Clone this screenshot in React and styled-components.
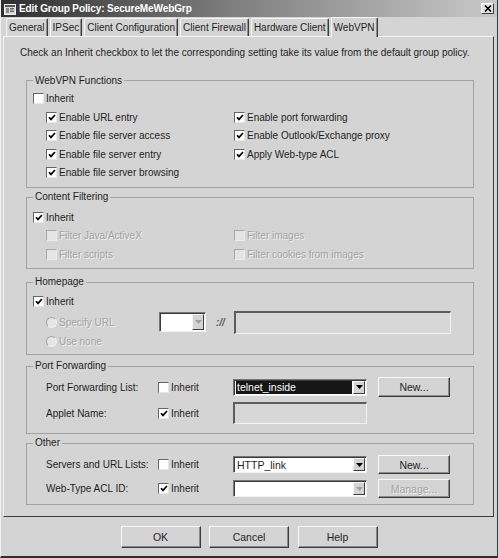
import React from 'react';
import styled, { createGlobalStyle } from 'styled-components';

const GlobalStyle = createGlobalStyle`
  html, body {
    margin: 0;
    padding: 0;
    background: #d4d4d4;
  }
  body {
    font-family: "Liberation Sans", Arial, sans-serif;
    font-size: 10px;
    color: #1e1e1e;
  }
  * {
    box-sizing: border-box;
  }
`;

const Window = styled.div`
  width: 498px;
  height: 558px;
  display: flex;
  flex-direction: column;
  background: #d4d4d4;
  border-left: 1px solid #f2f2f2;
  border-right: 1px solid #3a3a3a;
  border-bottom: 2px solid #2e2e2e;
`;

const TitleBar = styled.div`
  height: 17px;
  flex: none;
  display: flex;
  align-items: center;
  gap: 3px;
  padding: 0 3px 0 3px;
  background: linear-gradient(to right, #2e2e2e 0%, #7c7c7c 45%, #c9c9c9 100%);
  color: #fff;
  font-weight: bold;
  font-size: 10px;
  letter-spacing: -0.1px;
`;

const CloseButton = styled.div`
  margin-left: auto;
  width: 13px;
  height: 11px;
  display: flex;
  align-items: center;
  justify-content: center;
  background: #e2e2e2;
  border: 1px solid;
  border-color: #fafafa #3c3c3c #3c3c3c #fafafa;
`;

const TabStrip = styled.div`
  height: 19px;
  flex: none;
  display: flex;
  align-items: flex-end;
  gap: 2px;
  padding-left: 5px;
`;

const Tab = styled.div`
  height: ${p => (p.$active ? 20 : 18)}px;
  margin-bottom: ${p => (p.$active ? -1 : 0)}px;
  position: relative;
  z-index: ${p => (p.$active ? 1 : 0)};
  display: flex;
  align-items: center;
  padding: 0 2px;
  background: #d4d4d4;
  border-top: 1px solid #f6f6f6;
  border-left: 1px solid #f6f6f6;
  border-right: 1px solid #3c3c3c;
  border-radius: 2px 2px 0 0;
  box-shadow: inset -1px 0 0 #8e8e8e;
  white-space: nowrap;
`;

const Panel = styled.div`
  height: 481px;
  flex: none;
  margin: 0 3px 0 2px;
  padding: 9.5px 19px 0 22px;
  border: 1px solid;
  border-color: #f6f6f6 #3c3c3c #3c3c3c #f6f6f6;
  display: flex;
  flex-direction: column;
`;

const Intro = styled.div`
  margin-left: -6px;
  line-height: 12px;
  white-space: nowrap;
`;

const Group = styled.fieldset`
  margin: ${p => p.$mt}px 0 0;
  padding: ${p => p.$pt}px 0 ${p => p.$pb}px 6px;
  border: 1px solid #a2a2a2;
  min-width: 0;
`;

const Legend = styled.legend`
  padding: 0 2px;
  line-height: 12px;
  font-size: 10px;
`;

const Row = styled.div`
  height: ${p => p.$h || 18.5}px;
  display: flex;
  align-items: center;
  gap: 2px;
  color: ${p => (p.$disabled ? '#a3a3a3' : '#1e1e1e')};
  text-shadow: ${p => (p.$disabled ? '1px 1px 0 #efefef' : 'none')};
  white-space: nowrap;
`;

const Options = styled.div`
  margin-left: 13px;
  display: grid;
  grid-template-columns: 188px 1fr;
`;

const Box = styled.span`
  width: 11px;
  height: 11px;
  flex: none;
  display: flex;
  align-items: center;
  justify-content: center;
  background: ${p => (p.$disabled ? '#e4e4e4' : '#fff')};
  border: 1px solid;
  border-color: ${p =>
    p.$disabled ? '#a8a8a8 #ececec #ececec #a8a8a8' : '#666 #e6e6e6 #e6e6e6 #666'};
`;

const Radio = styled.span`
  width: 11px;
  height: 11px;
  flex: none;
  border-radius: 50%;
  background: #e6e6e6;
  border: 1px solid;
  border-color: #a4a4a4 #f0f0f0 #f0f0f0 #a4a4a4;
`;

const Check = ({ checked, disabled, children, h }) => (
  <Row $disabled={disabled} $h={h}>
    <Box $disabled={disabled}>
      {checked && (
        <svg width="8" height="7" viewBox="0 0 8 7">
          <path d="M1 3.2 L3 5.4 L7 1" fill="none" stroke="#000" strokeWidth="1.7" />
        </svg>
      )}
    </Box>
    {children}
  </Row>
);

const HomeRow = styled.div`
  height: ${p => p.$h}px;
  margin-left: 13px;
  display: grid;
  grid-template-columns: 113px 47px 28px 217px;
  align-items: center;
`;

const Slash = styled.span`
  padding-left: 10px;
  color: #5a5a5a;
  font-weight: bold;
  font-style: italic;
`;

const FormRow = styled.div`
  height: ${p => p.$h}px;
  margin: ${p => p.$mt || 0}px 0 0 13px;
  display: grid;
  grid-template-columns: 112px 75px 145px 72px;
  align-items: center;
`;

const Label = styled.span`
  white-space: nowrap;
`;

const ComboFrame = styled.div`
  width: ${p => p.$w}px;
  height: ${p => p.$h}px;
  display: flex;
  padding: 1px;
  background: #fff;
  border: 1px solid;
  border-color: #767676 #f2f2f2 #f2f2f2 #767676;
  box-shadow: inset 1px 1px 0 #3a3a3a;
`;

const ComboText = styled.div`
  flex: 1;
  display: flex;
  align-items: center;
  margin: 0 1px 0 1px;
  padding-left: 1px;
  background: ${p => (p.$selected ? '#161616' : 'transparent')};
  color: ${p => (p.$selected ? '#fff' : '#1e1e1e')};
  font-size: 10.5px;
`;

const ComboArrow = styled.div`
  width: 12px;
  flex: none;
  display: flex;
  align-items: center;
  justify-content: center;
  background: #d4d4d4;
  border: 1px solid;
  border-color: #f6f6f6 #3c3c3c #3c3c3c #f6f6f6;
`;

const Combo = ({ w, h, value, selected, disabled }) => (
  <ComboFrame $w={w} $h={h}>
    <ComboText $selected={selected}>{value}</ComboText>
    <ComboArrow>
      <svg width="7" height="4" viewBox="0 0 7 4">
        <path d="M0 0 H7 L3.5 4 Z" fill={disabled ? '#a0a0a0' : '#000'} />
      </svg>
    </ComboArrow>
  </ComboFrame>
);

const Field = styled.div`
  width: ${p => p.$w}px;
  height: ${p => p.$h}px;
  background: #d7d7d7;
  border-top: 2px solid #5c5c5c;
  border-left: 2px solid #5c5c5c;
  border-right: 1px solid #f2f2f2;
  border-bottom: 1px solid #f2f2f2;
`;

const Button = styled.button`
  width: ${p => p.$w}px;
  height: ${p => p.$h}px;
  padding: 0;
  background: #d4d4d4;
  font-family: "Liberation Sans", Arial, sans-serif;
  font-size: 10.5px;
  color: ${p => (p.disabled ? '#a3a3a3' : '#1e1e1e')};
  text-shadow: ${p => (p.disabled ? '1px 1px 0 #efefef' : 'none')};
  border: 1px solid;
  border-color: #f8f8f8 #3a3a3a #3a3a3a #f8f8f8;
  box-shadow: inset -1px -1px 0 #8c8c8c;
`;

const Footer = styled.div`
  flex: 1;
  display: flex;
  justify-content: center;
  gap: 8.5px;
  padding-top: 9px;
`;

const leftOptions = [
  'Enable URL entry',
  'Enable file server access',
  'Enable file server entry',
  'Enable file server browsing',
];
const rightOptions = ['Enable port forwarding', 'Enable Outlook/Exchange proxy', 'Apply Web-type ACL'];

const tabs = ['General', 'IPSec', 'Client Configuration', 'Client Firewall', 'Hardware Client', 'WebVPN'];

const AppIcon = () => (
  <svg width="12" height="12" viewBox="0 0 12 12">
    <rect x="0.5" y="1.5" width="11" height="10" fill="#d8d8d8" stroke="#f0f0f0" />
    <rect x="1" y="2" width="10" height="2" fill="#555" />
    <rect x="2" y="5" width="3" height="5" fill="#8a8a8a" />
    <rect x="6" y="5" width="4" height="1.5" fill="#6a6a6a" />
    <rect x="6" y="7.5" width="4" height="1.5" fill="#6a6a6a" />
  </svg>
);

export default function App() {
  return (
    <>
      <GlobalStyle />
      <Window>
        <TitleBar>
          <AppIcon />
          <span>Edit Group Policy: SecureMeWebGrp</span>
          <CloseButton>
            <svg width="8" height="7" viewBox="0 0 8 7">
              <path d="M1 0.5 L7 6.5 M7 0.5 L1 6.5" stroke="#000" strokeWidth="1.6" />
            </svg>
          </CloseButton>
        </TitleBar>

        <TabStrip>
          {tabs.map(t => (
            <Tab key={t} $active={t === 'WebVPN'}>
              {t}
            </Tab>
          ))}
        </TabStrip>

        <Panel>
          <Intro>
            Check an Inherit checkbox to let the corresponding setting take its value from the default group policy.
          </Intro>

          <Group $mt={16} $pt={3} $pb={5}>
            <Legend>WebVPN Functions</Legend>
            <Check>Inherit</Check>
            <Options>
              <div>
                {leftOptions.map(o => (
                  <Check key={o} checked>
                    {o}
                  </Check>
                ))}
              </div>
              <div>
                {rightOptions.map(o => (
                  <Check key={o} checked>
                    {o}
                  </Check>
                ))}
              </div>
            </Options>
          </Group>

          <Group $mt={3} $pt={5} $pb={4.5}>
            <Legend>Content Filtering</Legend>
            <Check checked>Inherit</Check>
            <Options>
              <div>
                <Check disabled>Filter Java/ActiveX</Check>
                <Check disabled>Filter scripts</Check>
              </div>
              <div>
                <Check disabled>Filter images</Check>
                <Check disabled>Filter cookies from images</Check>
              </div>
            </Options>
          </Group>

          <Group $mt={7} $pt={4} $pb={7.5}>
            <Legend>Homepage</Legend>
            <Check checked>Inherit</Check>
            <HomeRow $h={22}>
              <Row $disabled>
                <Radio />
                Specify URL
              </Row>
              <Combo w={47} h={20} disabled />
              <Slash>://</Slash>
              <Field $w={217} $h={23} />
            </HomeRow>
            <HomeRow $h={14}>
              <Row $disabled>
                <Radio />
                Use none
              </Row>
            </HomeRow>
          </Group>

          <Group $mt={5} $pt={5} $pb={9}>
            <Legend>Port Forwarding</Legend>
            <FormRow $h={20}>
              <Label>Port Forwarding List:</Label>
              <Check>Inherit</Check>
              <Combo w={134} h={17} value="telnet_inside" selected />
              <Button $w={72} $h={20}>New...</Button>
            </FormRow>
            <FormRow $h={22} $mt={5}>
              <Label>Applet Name:</Label>
              <Check checked>Inherit</Check>
              <Field $w={134} $h={22} />
            </FormRow>
          </Group>

          <Group $mt={3} $pt={6} $pb={6}>
            <Legend>Other</Legend>
            <FormRow $h={19}>
              <Label>Servers and URL Lists:</Label>
              <Check>Inherit</Check>
              <Combo w={134} h={17} value="HTTP_link" />
              <Button $w={72} $h={19}>New...</Button>
            </FormRow>
            <FormRow $h={19} $mt={5}>
              <Label>Web-Type ACL ID:</Label>
              <Check checked>Inherit</Check>
              <Combo w={134} h={17} disabled />
              <Button $w={72} $h={19} disabled>
                Manage...
              </Button>
            </FormRow>
          </Group>
        </Panel>

        <Footer>
          <Button $w={80} $h={22}>OK</Button>
          <Button $w={80} $h={22}>Cancel</Button>
          <Button $w={80} $h={22}>Help</Button>
        </Footer>
      </Window>
    </>
  );
}
